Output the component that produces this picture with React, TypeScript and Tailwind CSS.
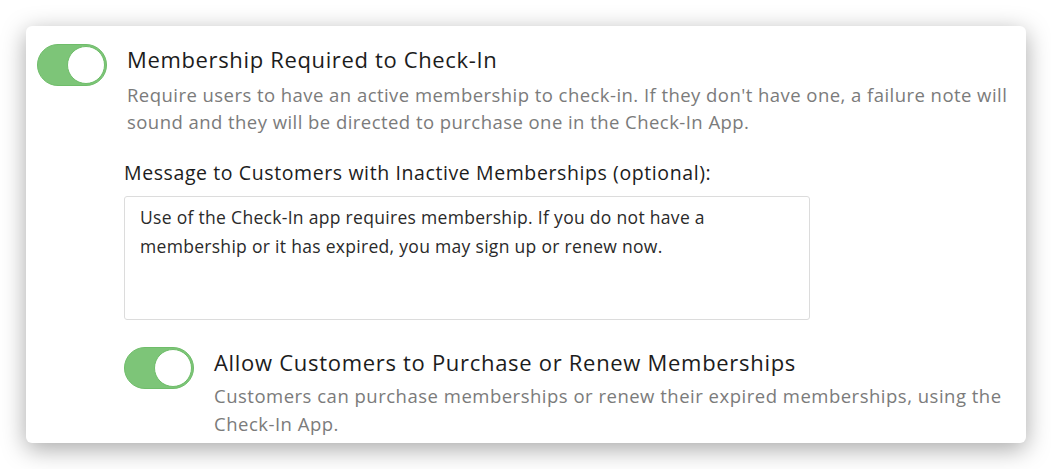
import { useState } from 'react'

function Toggle({ on, onChange }: { on: boolean; onChange: () => void }) {
  return (
    <button
      onClick={onChange}
      className={`relative shrink-0 w-[70px] h-[42px] rounded-full border transition-colors ${
        on ? 'bg-[#7dc578] border-[#6fbd6a]' : 'bg-[#e5e5e5] border-[#d4d4d4]'
      }`}
    >
      <span
        className={`absolute top-[1px] w-[38px] h-[38px] rounded-full bg-white border border-[#6fbd6a] transition-all ${
          on ? 'left-[29px]' : 'left-[1px]'
        }`}
      />
    </button>
  )
}

export default function App() {
  const [required, setRequired] = useState(true)
  const [allowPurchase, setAllowPurchase] = useState(true)

  return (
    <div
      className="w-[1051px] h-[469px] bg-white pt-[26px] pl-[26px]"
      style={{ fontFamily: '"Open Sans", Lato, sans-serif' }}
    >
      <div className="w-[1000px] h-[417px] bg-white rounded-md shadow-[0_6px_24px_rgba(0,0,0,0.35)] pt-[18px] pl-[11px] overflow-hidden">
        <div className="flex gap-[20px]">
          <Toggle on={required} onChange={() => setRequired(!required)} />
          <div className="pt-[1px]">
            <h2 className="text-[22px] leading-[28px] tracking-[0.65px] text-[#1c1c1c]">Membership Required to Check-In</h2>
            <p className="mt-[8px] text-[18.5px] leading-[27px] tracking-[0.45px] text-[#7b7b7b] w-[890px]">
              Require users to have an active membership to check-in. If they don't have one, a failure note will
              sound and they will be directed to purchase one in the Check-In App.
            </p>
          </div>
        </div>

        <div className="ml-[87px] mt-[25px]">
          <label className="block text-[19.5px] leading-[26px] tracking-[0.6px] text-[#1c1c1c]">
            Message to Customers with Inactive Memberships (optional):
          </label>
          <textarea
            className="block mt-[10px] w-[686px] h-[124px] border border-[#dcdcdc] rounded-[3px] px-[15px] pt-[6px] text-[17.5px] leading-[29px] tracking-[0.3px] text-[#2a2a2a] resize-none outline-none"
            defaultValue="Use of the Check-In app requires membership. If you do not have a membership or it has expired, you may sign up or renew now."
          />

          <div className="flex gap-[20px] mt-[27px]">
            <Toggle on={allowPurchase} onChange={() => setAllowPurchase(!allowPurchase)} />
            <div className="pt-[1px]">
              <h3 className="text-[22px] leading-[28px] tracking-[0.7px] text-[#1c1c1c]">Allow Customers to Purchase or Renew Memberships</h3>
              <p className="mt-[6px] text-[18.5px] leading-[28px] tracking-[0.5px] text-[#7b7b7b] w-[803px]">
                Customers can purchase memberships or renew their expired memberships, using the Check-In App.
              </p>
            </div>
          </div>
        </div>
      </div>
    </div>
  )
}
